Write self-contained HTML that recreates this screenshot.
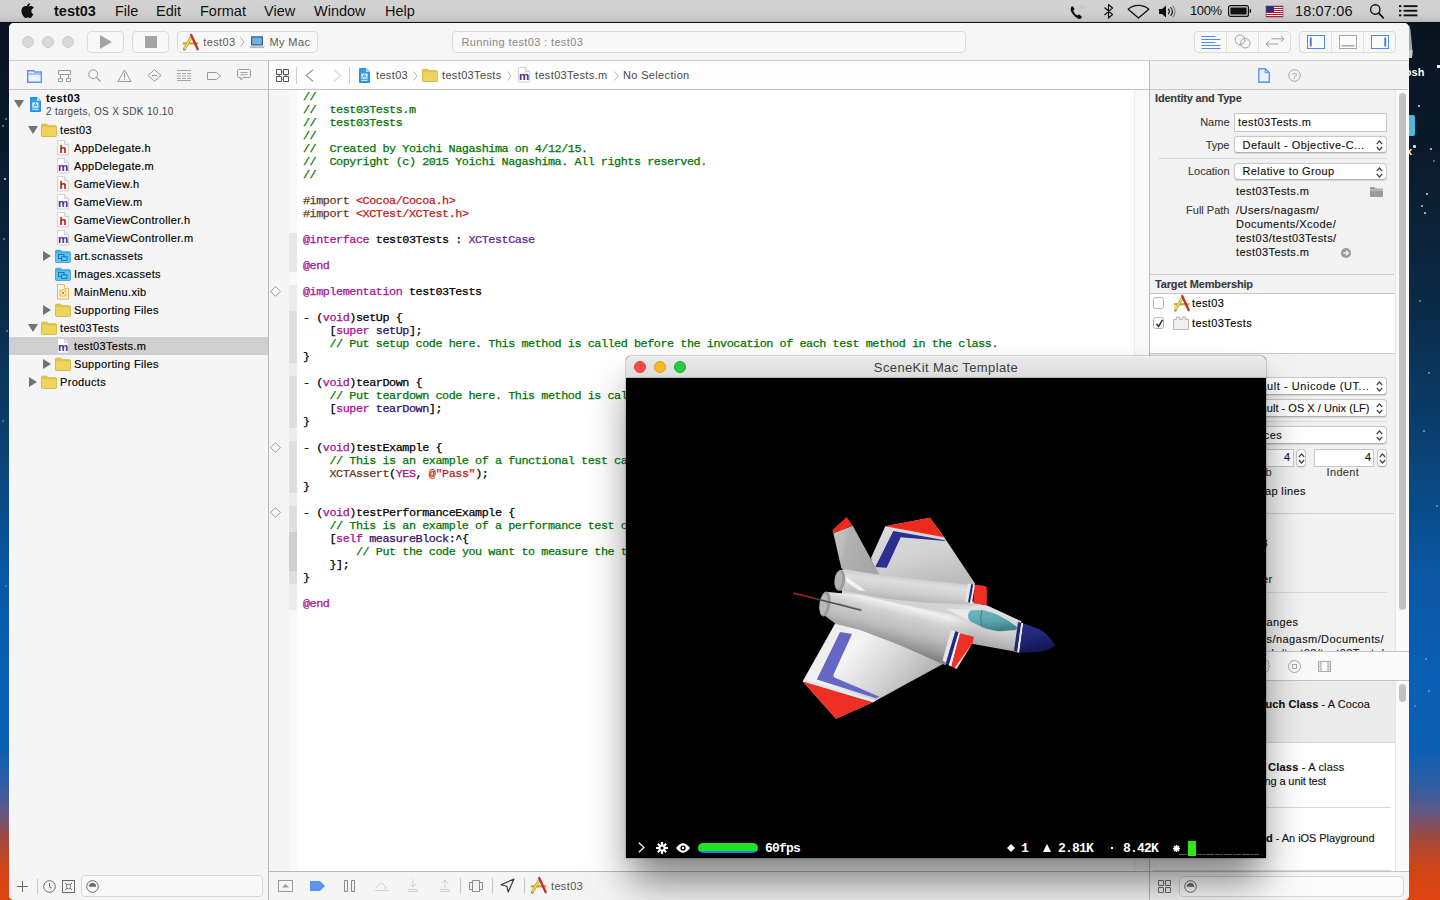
<!DOCTYPE html>
<html>
<head>
<meta charset="utf-8">
<title>Xcode</title>
<style>
*{box-sizing:border-box;margin:0;padding:0}
html,body{width:1440px;height:900px;overflow:hidden}
body{font-family:"Liberation Sans",sans-serif;font-size:11px;color:#222;position:relative;
 background:linear-gradient(180deg,#0a121c 0px,#0b1a2b 150px,#0b2a45 300px,#0a4274 450px,#0a58a6 580px,#0a60b4 680px,#0b5fb2 750px,#2e5ea2 785px,#5e588a 810px,#a04a3c 838px,#d04418 868px,#e04510 900px);}
.abs{position:absolute}
svg{position:absolute;overflow:visible}
/* ---------- menu bar ---------- */
#menubar{position:absolute;left:0;top:0;width:1440px;height:23px;background:linear-gradient(180deg,#d2d2d2 0,#cfcfcf 14px,#c4c4c4 20px,#b4b4b4 22px);border-bottom:1px solid #0c0f14}
#menubar .mi{position:absolute;top:2px;font-size:14.5px;line-height:18px;color:#111;white-space:nowrap}
/* ---------- xcode window ---------- */
#win{position:absolute;left:9px;top:23px;width:1400px;height:877px;background:#f5f5f5;border-radius:5px;overflow:hidden}
#toolbar{position:absolute;left:0;top:0;width:1400px;height:38px;background:#f6f6f6;border-bottom:1px solid #cfcfcf}
.tbtn{position:absolute;border:1px solid #dcdcdc;border-radius:4px;background:#f8f8f8}
/* navigator */
#nav{position:absolute;left:0;top:38px;width:260px;height:842px;background:#f5f5f5;border-right:1px solid #b8b8b8}
#navicons{position:absolute;left:0;top:0;width:259px;height:29px;border-bottom:1px solid #c4c4c4}
.row{position:absolute;left:0;width:259px;height:18px;font-size:11px;line-height:18px;color:#000;white-space:nowrap;-webkit-text-stroke:.15px}
.row.sel{background:#cfcfcf}
/* editor */
#editor{position:absolute;left:260px;top:38px;width:880px;height:842px;background:#fff}
#jump{position:absolute;left:0;top:0;width:880px;height:29px;background:#fdfdfd;border-bottom:1px solid #c4c4c4}
#code{position:absolute;left:34px;top:30px;font-family:"Liberation Mono",monospace;font-size:11.800px;letter-spacing:-.46px;line-height:13px;white-space:pre;color:#000;-webkit-text-stroke:.25px}
.c{color:#007400}.k{color:#aa0d91}.s{color:#c41a16}.p{color:#643820}.t{color:#5c2699}.f{color:#2e0d6e}
.jt{position:absolute;top:7px;font-size:11px;line-height:14px;color:#4a4a4a;letter-spacing:.35px;white-space:nowrap}
#gutter{position:absolute;left:0;top:29px;width:20px;height:781px;background:#f5f5f5}
#ribbon{position:absolute;left:20px;top:29px;width:8px;height:781px;background:#f9f9f9}
#scrollv{position:absolute;left:865px;top:29px;width:15px;height:781px;background:#fafafa;border-left:1px solid #ededed}
#dbg{position:absolute;left:0;top:810px;width:880px;height:32px;background:#f5f5f5;border-top:1px solid #b8b8b8}
/* inspector */
#insp{position:absolute;left:1140px;top:38px;width:260px;height:842px;background:#f2f2f2;overflow:hidden}
#insptab{position:absolute;left:0;top:0;width:259px;height:29px;border-bottom:1px solid #c4c4c4;background:#f3f3f3}
.it{position:absolute;font-size:11px;line-height:14px;color:#111;white-space:nowrap;margin-top:-.7px;-webkit-text-stroke:.12px}
.it.b{font-weight:bold;color:#3a3a3a}
.pop{position:absolute;background:#fff;border:1px solid #c9c9c9;border-bottom-color:#b2b2b2;border-radius:4px;box-shadow:0 .5px 1px rgba(0,0,0,.12)}
#scn{z-index:10;position:absolute;left:626px;top:356px;width:640px;height:502px;background:#000;border-radius:5px 5px 0 0;box-shadow:0 27px 40px -4px rgba(0,0,0,.5),0 0 3px rgba(0,0,0,.15),0 0 0 .5px rgba(0,0,0,.2)}
#scntitle{position:absolute;left:0;top:0;width:640px;height:22px;border-radius:5px 5px 0 0;background:linear-gradient(180deg,#f2f2f2 0,#e9e9e9 8%,#dcdcdc 100%);border-bottom:1px solid #b8b8b8}
.tl{position:absolute;top:4.700px;width:12px;height:12px;border-radius:6px;border:.5px solid #0002}
.st{position:absolute;top:485px;font-family:"Liberation Mono",monospace;font-weight:bold;font-size:13px;letter-spacing:-.8px;line-height:15px;color:#fff;white-space:pre}
.star{position:absolute;width:2px;height:2px;background:#cfd8e4;border-radius:1px}
</style>
</head>
<body>
<svg width="0" height="0" style="position:absolute"><defs>
<g id="xcicon">
 <path d="M.8 9.300H16.300" stroke="#c4aa3c" stroke-width="2.300"/>
 <path d="M2.300 15L8.800 3.800" stroke="#b89e30" stroke-width="2.800" stroke-linecap="round"/>
 <path d="M2.300 15L8.800 3.800" stroke="#eedb52" stroke-width="1.500" stroke-linecap="round"/>
 <path d="M9.200 1L15.600 15" stroke="#c42c2c" stroke-width="2.300" stroke-linecap="round"/>
 <path d="M1.300 15.800h2.200M14.600 15.800h2.200" stroke="#777" stroke-width="1.100"/>
</g>

<g id="folder"><path d="M.5 2.200c0-.6.400-1 1-1h4.300l1.400 1.500h7.300c.6 0 1 .4 1 1v8.800c0 .6-.4 1-1 1h-13c-.6 0-1-.4-1-1z" fill="#e3c646" stroke="#c9aa35" stroke-width=".7"/><path d="M.9 4.200h14.200v8.300c0 .3-.3.600-.6.600H1.500c-.3 0-.6-.3-.6-.6z" fill="#ecd55c"/></g>
<g id="bfolder"><path d="M.5 2.200c0-.6.400-1 1-1h4.300l1.400 1.500h7.300c.6 0 1 .4 1 1v8.800c0 .6-.4 1-1 1h-13c-.6 0-1-.4-1-1z" fill="#3fb0ea" stroke="#2c98d4" stroke-width=".7"/><path d="M.9 4.200h14.200v8.300c0 .3-.3.600-.6.600H1.500c-.3 0-.6-.3-.6-.6z" fill="#5cc3f2"/><rect x="3.500" y="5.500" width="5.500" height="4" fill="none" stroke="#1b6fb5" stroke-width=".9"/><rect x="6.500" y="7.800" width="5.500" height="3.700" fill="#5cc3f2" stroke="#1b6fb5" stroke-width=".9"/></g>
<g id="page"><path d="M.5.500h7l4 4v10.500H.5z" fill="#fff" stroke="#c8c8c8" stroke-width=".8"/><path d="M7.500.500v4h4" fill="#eee" stroke="#c8c8c8" stroke-width=".8"/></g>
<g id="tdown"><path d="M0 0h10l-5 8z" fill="#737373"/></g>
<g id="tright"><path d="M0 0l8 5-8 5z" fill="#737373"/></g>
<g id="projicon"><path d="M.6.600h6.500l3.300 3.300v10.500H.6z" fill="#2f9ff0" stroke="#1a7ad0" stroke-width=".9"/><path d="M7 .6v3.400h3.400z" fill="#bfe2ff"/><rect x="2.300" y="5.500" width="6.200" height="5.200" fill="#e8f5ff"/><path d="M3.500 9.800l1.900-3.500 1.900 3.500M4 8.700h2.800" stroke="#2a8be0" stroke-width=".8" fill="none"/><rect x="2.300" y="11.800" width="6.200" height="1" fill="#e8f5ff"/></g>
</defs></svg>
<div id="desk">
 <svg style="left:1405px;top:24px" width="10" height="36" viewBox="0 0 10 36"><path d="M0 2L4.500 2L5.500 6L7.600 28L7 34L0 34z" fill="#a4a8ad"/><path d="M0 26L7.400 26L7 34L0 34z" fill="#c6c9cc"/></svg>
 <span class="abs" style="left:1404.800px;top:65px;font-size:11px;line-height:14px;font-weight:bold;color:#fff;text-shadow:0 1px 2px rgba(0,0,0,.8)">osh</span>
 <div class="abs" style="left:1437px;top:65px;width:3px;height:3px;background:#e8edf2"></div>
 <div class="abs" style="left:1400px;top:115px;width:15px;height:21px;background:#4fb4e2;border-radius:2px"></div>
 <span class="abs" style="left:1406px;top:144px;font-size:11px;line-height:14px;font-weight:bold;color:#fff">x</span>
 <div class="abs" style="left:1413px;top:145px;width:3px;height:3px;background:#d8dde2;border-radius:1px"></div>
 <i class="star" style="left:1418px;top:105px"></i><i class="star" style="left:1430px;top:148px"></i><i class="star" style="left:1421px;top:205px;opacity:.9"></i><i class="star" style="left:1426px;top:193px"></i><i class="star" style="left:1424px;top:212px"></i><i class="star" style="left:1433px;top:160px;opacity:.5"></i>
 <i class="star" style="left:1419px;top:300px;opacity:.5"></i><i class="star" style="left:1428px;top:372px;opacity:.6"></i><i class="star" style="left:1423px;top:430px;opacity:.6"></i><i class="star" style="left:1436px;top:505px;opacity:.5"></i><i class="star" style="left:1425px;top:658px;opacity:.5"></i><i class="star" style="left:1428px;top:690px;opacity:.5"></i><i class="star" style="left:1414px;top:705px;opacity:.4"></i>
 <i class="star" style="left:4px;top:178px"></i><i class="star" style="left:2px;top:125px;opacity:.6"></i><i class="star" style="left:5px;top:118px;opacity:.5"></i><i class="star" style="left:3px;top:238px;opacity:.5"></i><i class="star" style="left:6px;top:330px;opacity:.5"></i><i class="star" style="left:2px;top:420px;opacity:.4"></i><i class="star" style="left:5px;top:585px;opacity:.4"></i>
</div>
<div id="menubar">
 <svg style="left:20.500px;top:1.500px" width="14" height="17" viewBox="0 0 15 18"><path fill="#111" d="M10.3 0.3c0.1 1-0.3 2-0.9 2.7-0.6 0.7-1.6 1.3-2.5 1.2-0.1-1 0.4-2 0.9-2.6C8.400 0.900 9.500 0.350 10.300 0.300zM13.500 6.100c-0.100 0.100-1.700 1-1.700 3 0 2.300 2 3.100 2.100 3.100 0 0.100-0.300 1.100-1.100 2.200-0.600 0.900-1.300 1.900-2.300 1.900-1 0-1.300-0.600-2.500-0.600-1.100 0-1.500 0.600-2.500 0.600-1 0-1.700-0.900-2.500-2C1.900 12.800 1 10.500 1 8.400c0-3.400 2.200-5.200 4.400-5.200 1.100 0 2.100 0.800 2.800 0.800 0.700 0 1.800-0.800 3.100-0.800 0.500 0 2.300 0.050 3.200 1.900z" transform="translate(-0.5,1) scale(0.98)"/></svg>
 <span class="mi" style="left:54px;font-weight:bold">test03</span>
 <span class="mi" style="left:115px">File</span>
 <span class="mi" style="left:156px">Edit</span>
 <span class="mi" style="left:200px">Format</span>
 <span class="mi" style="left:264px">View</span>
 <span class="mi" style="left:314px">Window</span>
 <span class="mi" style="left:385px">Help</span>
 <!-- phone -->
 <svg style="left:1069px;top:4px" width="18" height="16" viewBox="0 0 18 16"><path fill="#111" d="M1.800 4.300c-.6 1.200.2 4 2.700 6.800 2.500 2.800 5.200 4.300 6.600 3.800l1.500-1.200c.4-.3.400-.8 0-1.200l-2-1.700c-.3-.3-.8-.3-1.100 0l-.8.800c-.8-.3-1.900-1-2.800-2.100-.9-1.100-1.500-2.200-1.600-3.100l.9-.7c.4-.3.400-.7.100-1.100L3.800 2.600c-.3-.4-.8-.4-1.200 0z"/><g fill="#b4b4b4"><circle cx="9.500" cy="4.500" r=".7"/><circle cx="11.500" cy="3" r=".7"/><circle cx="13.500" cy="1.500" r=".7"/><circle cx="11.500" cy="6" r=".6"/><circle cx="13.500" cy="4.200" r=".6"/><circle cx="15.300" cy="2.800" r=".6"/></g></svg>
 <!-- bluetooth -->
 <svg style="left:1103px;top:3px" width="12" height="17" viewBox="0 0 12 17"><path fill="none" stroke="#111" stroke-width="1.200" stroke-linejoin="round" d="M1.500 4.500l8 7-4 3.500V1.500l4 3.500-8 7"/></svg>
 <!-- wifi -->
 <svg style="left:1127px;top:4px" width="23" height="15" viewBox="0 0 23 15"><path fill="none" stroke="#111" stroke-width="1.300" stroke-linejoin="round" d="M1.200 5.200C4 2.600 7.600 1.300 11.500 1.300s7.500 1.300 10.300 3.900L11.500 14z"/></svg>
 <!-- volume -->
 <svg style="left:1158px;top:4px" width="19" height="15" viewBox="0 0 19 15"><path fill="#111" d="M1 5h3l4-3.500v12L4 10H1z"/><path fill="none" stroke="#111" stroke-width="1.100" stroke-linecap="round" d="M10.500 5.200c1 1.300 1 3.300 0 4.600M12.800 3.500c1.900 2.300 1.900 5.700 0 8"/><path fill="none" stroke="#777" stroke-width="1.100" stroke-linecap="round" d="M15 2c2.700 3.200 2.700 7.800 0 11"/></svg>
 <span class="mi" style="left:1190px;font-size:13px;letter-spacing:-.4px">100%</span>
 <!-- battery -->
 <svg style="left:1228px;top:5px" width="24" height="12" viewBox="0 0 24 12"><rect x=".6" y=".6" width="19.800" height="10.800" rx="2" fill="none" stroke="#111" stroke-width="1.200"/><rect x="2.400" y="2.400" width="16.200" height="7.200" rx=".6" fill="#111"/><path fill="#111" d="M21.600 4h.6c.5 0 .9.400.9.900v2.200c0 .5-.4.900-.9.900h-.6z"/></svg>
 <!-- flag -->
 <svg style="left:1266px;top:6px" width="17" height="11" viewBox="0 0 17 11"><rect width="17" height="11" fill="#f4f4f4"/><g fill="#c8102e"><rect y="0" width="17" height="1"/><rect y="2" width="17" height="1"/><rect y="4" width="17" height="1"/><rect y="6" width="17" height="1"/><rect y="8" width="17" height="1"/><rect y="10" width="17" height="1"/></g><rect width="8" height="6" fill="#2a2f7a"/><rect width="17" height="11" fill="none" stroke="#555" stroke-width=".6"/></svg>
 <span class="mi" style="left:1295px;letter-spacing:.15px">18:07:06</span>
 <!-- search -->
 <svg style="left:1369px;top:3px" width="16" height="16" viewBox="0 0 16 16"><circle cx="6.300" cy="6.500" r="4.700" fill="none" stroke="#111" stroke-width="1.400"/><path stroke="#111" stroke-width="1.800" stroke-linecap="round" d="M9.800 10.200l4.500 4.600"/></svg>
 <!-- list -->
 <svg style="left:1399px;top:5px" width="19" height="12" viewBox="0 0 19 12"><g fill="#111"><rect x="0" y=".2" width="2.400" height="1.900"/><rect x="0" y="4.800" width="2.400" height="1.900"/><rect x="0" y="9.400" width="2.400" height="1.900"/><rect x="4.600" y=".2" width="13.800" height="1.900"/><rect x="4.600" y="4.800" width="13.800" height="1.900"/><rect x="4.600" y="9.400" width="13.800" height="1.900"/></g></svg>
</div>
<div id="win">
 <div id="toolbar">
  <div class="abs" style="left:13px;top:13px;width:12px;height:12px;border-radius:6px;background:#d9d9d9;border:1px solid #cdcdcd"></div>
  <div class="abs" style="left:33px;top:13px;width:12px;height:12px;border-radius:6px;background:#d9d9d9;border:1px solid #cdcdcd"></div>
  <div class="abs" style="left:53px;top:13px;width:12px;height:12px;border-radius:6px;background:#d9d9d9;border:1px solid #cdcdcd"></div>
  <div class="tbtn" style="left:78px;top:8px;width:37px;height:22px"></div>
  <svg style="left:91px;top:12px" width="12" height="14" viewBox="0 0 12 14"><path fill="#a4a4a4" d="M0 0l12 7-12 7z"/></svg>
  <div class="tbtn" style="left:123px;top:8px;width:37px;height:22px"></div>
  <div class="abs" style="left:136px;top:13px;width:12px;height:12px;background:#a4a4a4"></div>
  <div class="tbtn" style="left:168px;top:8px;width:141px;height:22px"></div>
  <svg style="left:173px;top:10.500px" width="17" height="17" viewBox="0 0 17 17"><use href="#xcicon"/></svg>
  <span class="abs" style="left:194.300px;top:12px;font-size:11px;line-height:14px;color:#5c5c5c;letter-spacing:.38px">test03</span>
  <svg style="left:231px;top:14px" width="5" height="10" viewBox="0 0 5 10"><path fill="none" stroke="#b0b0b0" stroke-width="1" d="M.5.500l3.500 4.500L.5 9.500"/></svg>
  <svg style="left:240px;top:13px" width="16" height="13" viewBox="0 0 16 13"><rect x="2" y=".3" width="12" height="9.200" rx=".8" fill="#41587f"/><rect x="3.200" y="1.500" width="9.600" height="6.800" fill="#6cb2ec"/><path fill="#c2c5ca" d="M.2 10h15.600l-.8 1.700H1z"/><path d="M1 11.600h14" stroke="#8a9a8a" stroke-width=".5"/></svg>
  <span class="abs" style="left:260.500px;top:12px;font-size:11px;line-height:14px;color:#5c5c5c;letter-spacing:.38px">My Mac</span>
  <div class="tbtn" style="left:443px;top:8px;width:514px;height:22px;background:#f9f9f9"></div>
  <span class="abs" style="left:452.500px;top:12px;font-size:11px;line-height:14px;color:#8a8a8a;letter-spacing:.37px">Running test03 : test03</span>
  <!-- editor mode group -->
  <div class="tbtn" style="left:1185px;top:8px;width:97px;height:22px"></div>
  <div class="abs" style="left:1217px;top:9px;width:1px;height:20px;background:#e2e2e2"></div>
  <div class="abs" style="left:1249px;top:9px;width:1px;height:20px;background:#e2e2e2"></div>
  <svg style="left:1192px;top:12px" width="20" height="14" viewBox="0 0 20 14"><path stroke="#4c8bf5" stroke-width="1" d="M.5 1.500h14M.5 4.500h19M.5 7.500h14M.5 10.500h19M.5 13.500h19"/></svg>
  <svg style="left:1225px;top:11px" width="18" height="16" viewBox="0 0 18 16"><circle cx="6" cy="5.800" r="4.800" fill="none" stroke="#a0a0a0"/><circle cx="11.300" cy="9.200" r="4.800" fill="none" stroke="#a0a0a0"/></svg>
  <svg style="left:1256px;top:12px" width="20" height="13" viewBox="0 0 20 13"><path fill="none" stroke="#a0a0a0" stroke-width="1" d="M6.500 3.800H19M15.800.800l3.200 3-3.200 3M13.500 9H1M4.200 6L1 9l3.200 3"/></svg>
  <!-- panel group -->
  <div class="tbtn" style="left:1290px;top:8px;width:97px;height:22px"></div>
  <div class="abs" style="left:1322px;top:9px;width:1px;height:20px;background:#e2e2e2"></div>
  <div class="abs" style="left:1354px;top:9px;width:1px;height:20px;background:#e2e2e2"></div>
  <svg style="left:1298px;top:12px" width="18" height="14" viewBox="0 0 18 14"><rect x=".5" y=".5" width="17" height="13" fill="#fbfbfb" stroke="#4c8bf5"/><rect x="2.800" y="2.500" width="1.900" height="9" fill="#4c78d8"/></svg>
  <svg style="left:1330px;top:12px" width="18" height="14" viewBox="0 0 18 14"><rect x=".5" y=".5" width="17" height="13" fill="#fbfbfb" stroke="#a8a8a8"/><rect x="2.500" y="10" width="13" height="1.500" fill="#a8a8a8"/></svg>
  <svg style="left:1362px;top:12px" width="18" height="14" viewBox="0 0 18 14"><rect x=".5" y=".5" width="17" height="13" fill="#fbfbfb" stroke="#4c8bf5"/><rect x="13.300" y="2.500" width="1.900" height="9" fill="#4c78d8"/></svg>
 </div>
 <div id="nav"><div id="navicons">
   <svg style="left:18px;top:8.500px" width="15" height="13" viewBox="0 0 15 13"><path d="M.7.700h5.800l1.200 1.300h6.600v10.300H.7z" fill="#eaf1ff" stroke="#5b93f3" stroke-width="1.400" stroke-linejoin="miter"/><path d="M.7 4h13.600" stroke="#5b93f3" stroke-width="1.200"/></svg>
   <svg style="left:49px;top:9px" width="13" height="12" viewBox="0 0 13 12"><path fill="none" stroke="#9a9a9a" d="M.5.500h12v4h-12zM.5 8.500h4v3h-4zM8.500 8.500h4v3h-4zM2.500 4.500v4M10.500 4.500v4"/></svg>
   <svg style="left:79px;top:8px" width="13" height="13" viewBox="0 0 13 13"><circle cx="5.200" cy="5.200" r="4.400" fill="none" stroke="#9a9a9a"/><path d="M8.400 8.400l4 4" stroke="#9a9a9a" stroke-width="1.300"/></svg>
   <svg style="left:108px;top:8px" width="15" height="13" viewBox="0 0 15 13"><path d="M7.500 1l6.500 11.500H1z" fill="none" stroke="#9a9a9a" stroke-linejoin="round"/><path d="M7.500 4.500v4.500M7.500 10v1.200" stroke="#9a9a9a" stroke-width="1.100"/></svg>
   <svg style="left:138px;top:8px" width="15" height="13" viewBox="0 0 15 13"><path d="M7.500.700l6.500 5.800-6.500 5.800L1 6.500z" fill="none" stroke="#9a9a9a" stroke-linejoin="round"/><path d="M4.800 6.500h5.400" stroke="#9a9a9a"/></svg>
   <svg style="left:168px;top:9px" width="14" height="11" viewBox="0 0 14 11"><path stroke="#9a9a9a" d="M0 .5h14M0 3.500h4M5 3.500h4M10 3.500h4M0 6h4M5 6h4M10 6h4M0 8.500h4M5 8.500h4M10 8.500h4M0 10.500h14" stroke-width=".9"/></svg>
   <svg style="left:198px;top:11px" width="14" height="8" viewBox="0 0 14 8"><path d="M.5.500h9l4 3.500-4 3.500h-9z" fill="none" stroke="#9a9a9a" stroke-linejoin="round"/></svg>
   <svg style="left:228px;top:8px" width="14" height="12" viewBox="0 0 14 12"><path d="M1.500.500h11c.6 0 1 .4 1 1v6c0 .6-.4 1-1 1H6l-2 2.500v-2.500H1.500c-.6 0-1-.4-1-1v-6c0-.6.400-1 1-1z" fill="none" stroke="#9a9a9a"/><path d="M3.500 3.500h7M3.500 5.800h7" stroke="#9a9a9a" stroke-width=".9"/></svg>
  </div>
  <svg style="left:5px;top:39px" width="10" height="8" viewBox="0 0 10 8"><use href="#tdown"/></svg>
  <svg style="left:21px;top:36px" width="11" height="15" viewBox="0 0 11 15"><path d="M.6.600h6.500l3.300 3.300v10.500H.6z" fill="#2f9ff0" stroke="#1a7ad0" stroke-width=".9"/><path d="M7 .6v3.400h3.400z" fill="#bfe2ff"/><rect x="2.300" y="5.500" width="6.200" height="5.200" fill="#e8f5ff"/><path d="M3.500 9.800l1.900-3.500 1.900 3.500M4 8.700h2.800" stroke="#2a8be0" stroke-width=".8" fill="none"/><rect x="2.300" y="11.800" width="6.200" height="1" fill="#e8f5ff"/></svg>
  <span class="abs" style="left:37px;top:30px;font-size:11px;line-height:14px;font-weight:bold;color:#000;letter-spacing:.4px">test03</span>
  <span class="abs" style="left:37px;top:44px;font-size:10px;line-height:13px;color:#444;letter-spacing:.32px">2 targets, OS X SDK 10.10</span>
  <div class="row" style="top:60px"><span class="abs" style="left:51px;letter-spacing:.33px">test03</span></div>
  <svg style="left:19px;top:65px" width="10" height="8" viewBox="0 0 10 8"><use href="#tdown"/></svg>
  <svg style="left:32px;top:62px" width="16" height="14" viewBox="0 0 16 14"><use href="#folder"/></svg>
  <div class="row" style="top:78px"><span class="abs" style="left:65px;letter-spacing:.33px">AppDelegate.h</span></div>
  <svg style="left:48px;top:79px" width="12" height="16" viewBox="0 0 12 16"><use href="#page"/><text x="6" y="13.300" text-anchor="middle" font-family="Liberation Sans" font-weight="bold" font-size="11.500" fill="#a01818">h</text></svg>
  <div class="row" style="top:96px"><span class="abs" style="left:65px;letter-spacing:.33px">AppDelegate.m</span></div>
  <svg style="left:48px;top:97px" width="12" height="16" viewBox="0 0 12 16"><use href="#page"/><text x="6" y="13.300" text-anchor="middle" font-family="Liberation Sans" font-weight="bold" font-size="11.500" fill="#4a2a9a">m</text></svg>
  <div class="row" style="top:114px"><span class="abs" style="left:65px;letter-spacing:.33px">GameView.h</span></div>
  <svg style="left:48px;top:115px" width="12" height="16" viewBox="0 0 12 16"><use href="#page"/><text x="6" y="13.300" text-anchor="middle" font-family="Liberation Sans" font-weight="bold" font-size="11.500" fill="#a01818">h</text></svg>
  <div class="row" style="top:132px"><span class="abs" style="left:65px;letter-spacing:.33px">GameView.m</span></div>
  <svg style="left:48px;top:133px" width="12" height="16" viewBox="0 0 12 16"><use href="#page"/><text x="6" y="13.300" text-anchor="middle" font-family="Liberation Sans" font-weight="bold" font-size="11.500" fill="#4a2a9a">m</text></svg>
  <div class="row" style="top:150px"><span class="abs" style="left:65px;letter-spacing:.33px">GameViewController.h</span></div>
  <svg style="left:48px;top:151px" width="12" height="16" viewBox="0 0 12 16"><use href="#page"/><text x="6" y="13.300" text-anchor="middle" font-family="Liberation Sans" font-weight="bold" font-size="11.500" fill="#a01818">h</text></svg>
  <div class="row" style="top:168px"><span class="abs" style="left:65px;letter-spacing:.33px">GameViewController.m</span></div>
  <svg style="left:48px;top:169px" width="12" height="16" viewBox="0 0 12 16"><use href="#page"/><text x="6" y="13.300" text-anchor="middle" font-family="Liberation Sans" font-weight="bold" font-size="11.500" fill="#4a2a9a">m</text></svg>
  <div class="row" style="top:186px"><span class="abs" style="left:65px;letter-spacing:.33px">art.scnassets</span></div>
  <svg style="left:34px;top:190px" width="8" height="10" viewBox="0 0 8 10"><use href="#tright"/></svg>
  <svg style="left:46px;top:188px" width="16" height="14" viewBox="0 0 16 14"><use href="#bfolder"/></svg>
  <div class="row" style="top:204px"><span class="abs" style="left:65px;letter-spacing:.33px">Images.xcassets</span></div>
  <svg style="left:46px;top:206px" width="16" height="14" viewBox="0 0 16 14"><use href="#bfolder"/></svg>
  <div class="row" style="top:222px"><span class="abs" style="left:65px;letter-spacing:.33px">MainMenu.xib</span></div>
  <svg style="left:48px;top:223px" width="12" height="16" viewBox="0 0 12 16"><path d="M.5.500h7l4 4v10.500H.5z" fill="#fff8e0" stroke="#e0b040" stroke-width=".9"/><path d="M7.500.500v4h4" fill="#fff" stroke="#e0b040" stroke-width=".8"/><rect x="3" y="6" width="6" height="6" fill="none" stroke="#e0a020" stroke-width=".8"/><path d="M4.500 7.500l3 3M7.500 7.500l-3 3" stroke="#e07020" stroke-width=".9"/></svg>
  <div class="row" style="top:240px"><span class="abs" style="left:65px;letter-spacing:.33px">Supporting Files</span></div>
  <svg style="left:34px;top:244px" width="8" height="10" viewBox="0 0 8 10"><use href="#tright"/></svg>
  <svg style="left:46px;top:242px" width="16" height="14" viewBox="0 0 16 14"><use href="#folder"/></svg>
  <div class="row" style="top:258px"><span class="abs" style="left:51px;letter-spacing:.33px">test03Tests</span></div>
  <svg style="left:19px;top:263px" width="10" height="8" viewBox="0 0 10 8"><use href="#tdown"/></svg>
  <svg style="left:32px;top:260px" width="16" height="14" viewBox="0 0 16 14"><use href="#folder"/></svg>
  <div class="row sel" style="top:276px"><span class="abs" style="left:65px;letter-spacing:.33px">test03Tests.m</span></div>
  <svg style="left:48px;top:277px" width="12" height="16" viewBox="0 0 12 16"><use href="#page"/><text x="6" y="13.300" text-anchor="middle" font-family="Liberation Sans" font-weight="bold" font-size="11.500" fill="#4a2a9a">m</text></svg>
  <div class="row" style="top:294px"><span class="abs" style="left:65px;letter-spacing:.33px">Supporting Files</span></div>
  <svg style="left:34px;top:298px" width="8" height="10" viewBox="0 0 8 10"><use href="#tright"/></svg>
  <svg style="left:46px;top:296px" width="16" height="14" viewBox="0 0 16 14"><use href="#folder"/></svg>
  <div class="row" style="top:312px"><span class="abs" style="left:51px;letter-spacing:.33px">Products</span></div>
  <svg style="left:20px;top:316px" width="8" height="10" viewBox="0 0 8 10"><use href="#tright"/></svg>
  <svg style="left:32px;top:314px" width="16" height="14" viewBox="0 0 16 14"><use href="#folder"/></svg>
  <svg style="left:8px;top:820px" width="11" height="11" viewBox="0 0 11 11"><path d="M5.500 0v11M0 5.500h11" stroke="#6a6a6a" stroke-width="1"/></svg>
  <div class="abs" style="left:28px;top:818px;width:1px;height:15px;background:#c8c8c8"></div>
  <svg style="left:34px;top:819px" width="13" height="13" viewBox="0 0 13 13"><circle cx="6.500" cy="6.500" r="5.800" fill="none" stroke="#6a6a6a"/><path d="M6.500 3v3.800l2.300 1.300" fill="none" stroke="#6a6a6a"/></svg>
  <svg style="left:53px;top:819px" width="13" height="13" viewBox="0 0 13 13"><rect x=".5" y=".5" width="12" height="12" fill="none" stroke="#6a6a6a"/><path d="M3 3l7 7M10 3l-7 7" stroke="#6a6a6a"/><circle cx="6.500" cy="6.500" r="2.200" fill="#f5f5f5" stroke="#6a6a6a" stroke-width=".8"/></svg>
  <div class="abs" style="left:72px;top:814px;width:182px;height:22px;border:1px solid #d6d6d6;border-radius:4px;background:#f9f9f9"></div>
  <svg style="left:77px;top:819px" width="13" height="13" viewBox="0 0 13 13"><circle cx="6.500" cy="6.500" r="5.800" fill="none" stroke="#6a6a6a"/><path d="M2.800 6.800a3.700 3.700 0 0 1 7.400 0z" fill="#6a6a6a"/></svg>
 </div>
 <div id="editor"><div id="jump">
   <svg style="left:6.500px;top:8px" width="13" height="13" viewBox="0 0 13 13"><path fill="none" stroke="#555" stroke-width="1" d="M.5.500h5v5h-5zM7.500.500h5v5h-5zM.5 7.500h5v5h-5zM7.500 7.500h5v5h-5zM5.500 3h2M3 5.500v2M5.500 10h2M10 5.500v2"/></svg>
   <div class="abs" style="left:27px;top:6px;width:1px;height:17px;background:#cfcfcf"></div>
   <svg style="left:36px;top:8px" width="9" height="13" viewBox="0 0 9 13"><path fill="none" stroke="#9a9a9a" stroke-width="1.200" d="M8 .7L1.300 6.500 8 12.300"/></svg>
   <svg style="left:64px;top:8px" width="9" height="13" viewBox="0 0 9 13"><path fill="none" stroke="#d6d6d6" stroke-width="1.200" d="M1 .7l6.700 5.800L1 12.300"/></svg>
   <div class="abs" style="left:80px;top:6px;width:1px;height:17px;background:#cfcfcf"></div>
   <svg style="left:90px;top:7px" width="11" height="15" viewBox="0 0 11 15"><use href="#projicon"/></svg>
   <span class="jt" style="left:107px">test03</span>
   <svg class="chev" style="left:144px;top:10px" width="5" height="10" viewBox="0 0 5 10"><path fill="none" stroke="#b8b8b8" d="M.5.500l3.500 4.500L.5 9.500"/></svg>
   <svg style="left:153px;top:7px" width="16" height="14" viewBox="0 0 16 14"><use href="#folder"/></svg>
   <span class="jt" style="left:173px">test03Tests</span>
   <svg class="chev" style="left:238px;top:10px" width="5" height="10" viewBox="0 0 5 10"><path fill="none" stroke="#b8b8b8" d="M.5.500l3.500 4.500L.5 9.500"/></svg>
   <svg style="left:249px;top:6px" width="12" height="16" viewBox="0 0 12 16"><use href="#page"/><text x="6" y="13.300" text-anchor="middle" font-family="Liberation Sans" font-weight="bold" font-size="11.500" fill="#4a2a9a">m</text></svg>
   <span class="jt" style="left:266px">test03Tests.m</span>
   <svg class="chev" style="left:345px;top:10px" width="5" height="10" viewBox="0 0 5 10"><path fill="none" stroke="#b8b8b8" d="M.5.500l3.500 4.500L.5 9.500"/></svg>
   <span class="jt" style="left:354px">No Selection</span>
  </div>
  <div id="gutter"></div><div id="ribbon"></div><div id="scrollv"></div>
  <div class="abs" style="left:20px;top:172px;width:8px;height:39px;background:#e8e8e8"></div>
  <div class="abs" style="left:20px;top:224px;width:8px;height:325px;background:#ececec"></div>
  <div class="abs" style="left:20px;top:250px;width:8px;height:52px;background:#dedede"></div>
  <div class="abs" style="left:20px;top:315px;width:8px;height:52px;background:#dedede"></div>
  <div class="abs" style="left:20px;top:380px;width:8px;height:52px;background:#dedede"></div>
  <div class="abs" style="left:20px;top:445px;width:8px;height:78px;background:#dedede"></div>
  <div class="abs" style="left:20px;top:471px;width:8px;height:39px;background:#cfcfcf"></div>
  <svg style="left:1px;top:225.0px" width="11" height="11" viewBox="0 0 11 11"><path d="M5.500.700l4.800 4.800-4.800 4.800L.7 5.500z" fill="#fff" stroke="#8a8a8a" stroke-width=".9"/></svg>
  <svg style="left:1px;top:381.0px" width="11" height="11" viewBox="0 0 11 11"><path d="M5.500.700l4.800 4.800-4.800 4.800L.7 5.500z" fill="#fff" stroke="#8a8a8a" stroke-width=".9"/></svg>
  <svg style="left:1px;top:446.0px" width="11" height="11" viewBox="0 0 11 11"><path d="M5.500.700l4.800 4.800-4.800 4.800L.7 5.500z" fill="#fff" stroke="#8a8a8a" stroke-width=".9"/></svg>
  <div id="code"><span class="c">//</span>
<span class="c">//  test03Tests.m</span>
<span class="c">//  test03Tests</span>
<span class="c">//</span>
<span class="c">//  Created by Yoichi Nagashima on 4/12/15.</span>
<span class="c">//  Copyright (c) 2015 Yoichi Nagashima. All rights reserved.</span>
<span class="c">//</span>

<span class="p">#import </span><span class="s">&lt;Cocoa/Cocoa.h&gt;</span>
<span class="p">#import </span><span class="s">&lt;XCTest/XCTest.h&gt;</span>

<span class="k">@interface</span> test03Tests : <span class="t">XCTestCase</span>

<span class="k">@end</span>

<span class="k">@implementation</span> test03Tests

- (<span class="k">void</span>)setUp {
    [<span class="k">super</span> <span class="f">setUp</span>];
    <span class="c">// Put setup code here. This method is called before the invocation of each test method in the class.</span>
}

- (<span class="k">void</span>)tearDown {
    <span class="c">// Put teardown code here. This method is called after the invocation of each test method in the class.</span>
    [<span class="k">super</span> <span class="f">tearDown</span>];
}

- (<span class="k">void</span>)testExample {
    <span class="c">// This is an example of a functional test case.</span>
    <span class="p">XCTAssert</span>(<span class="k">YES</span>, <span class="s">@"Pass"</span>);
}

- (<span class="k">void</span>)testPerformanceExample {
    <span class="c">// This is an example of a performance test case.</span>
    [<span class="k">self</span> <span class="f">measureBlock</span>:^{
        <span class="c">// Put the code you want to measure the time of here.</span>
    }];
}

<span class="k">@end</span></div>
  <div id="dbg">
   <svg style="left:9px;top:8px" width="15" height="12" viewBox="0 0 15 12"><rect x=".5" y=".5" width="14" height="11" fill="none" stroke="#9a9a9a"/><path d="M4 7.500L7.500 4 11 7.500z" fill="#9a9a9a"/></svg>
   <svg style="left:41px;top:9px" width="15" height="10" viewBox="0 0 15 10"><path d="M1 0h9l5 5-5 5H1c-.6 0-1-.4-1-1V1c0-.6.400-1 1-1z" fill="#5b93f3"/></svg>
   <svg style="left:75px;top:8px" width="11" height="12" viewBox="0 0 11 12"><path fill="none" stroke="#8a8a8a" d="M.5.500h3v11h-3zM7.500.500h3v11h-3z"/></svg>
   <svg style="left:106px;top:8px" width="14" height="12" viewBox="0 0 14 12"><path fill="none" stroke="#d0d0d0" d="M1 8l5.500-5.500L12 8H9M0 10.500h14"/></svg>
   <svg style="left:139px;top:7px" width="10" height="13" viewBox="0 0 10 13"><path fill="none" stroke="#d0d0d0" d="M5 0v8M2 5l3 3 3-3M0 10.500h10M0 12.500h10"/></svg>
   <svg style="left:171px;top:7px" width="10" height="13" viewBox="0 0 10 13"><path fill="none" stroke="#d0d0d0" d="M5 9V1M2 4l3-3 3 3M0 10.500h10M0 12.500h10"/></svg>
   <div class="abs" style="left:191px;top:6px;width:1px;height:16px;background:#c4c4c4"></div>
   <svg style="left:200px;top:8px" width="14" height="12" viewBox="0 0 14 12"><path fill="none" stroke="#8a8a8a" d="M3.500.500h7v11h-7zM.5 2.500h3v7h-3zM10.500 2.500h3v7h-3z"/></svg>
   <div class="abs" style="left:223px;top:6px;width:1px;height:16px;background:#c4c4c4"></div>
   <svg style="left:231px;top:6px" width="15" height="15" viewBox="0 0 15 15"><path fill="none" stroke="#333" stroke-width="1.100" stroke-linejoin="round" d="M14 1L1 6.800l5.800 1.400L8.200 14z"/></svg>
   <div class="abs" style="left:255px;top:6px;width:1px;height:16px;background:#c4c4c4"></div>
   <svg style="left:261px;top:5px" width="17" height="17" viewBox="0 0 17 17"><use href="#xcicon"/></svg>
   <span class="abs" style="left:282px;top:7px;font-size:11px;line-height:14px;color:#555;letter-spacing:.35px">test03</span>
  </div>
 </div>
 <div id="insp">
  <div id="insptab"></div>
  <svg style="left:109px;top:7px" width="12" height="15" viewBox="0 0 12 15"><path d="M.8.800h6.500l4 4v9.400H.8z" fill="#e9f1ff" stroke="#5b93f3" stroke-width="1.400" stroke-linejoin="round"/><path d="M7.300.800v4h4" fill="none" stroke="#5b93f3" stroke-width="1.100"/></svg>
  <svg style="left:139px;top:8px" width="13" height="13" viewBox="0 0 13 13"><circle cx="6.500" cy="6.500" r="5.800" fill="none" stroke="#a8a8a8"/><text x="6.500" y="9.800" text-anchor="middle" font-family="Liberation Sans" font-size="9" fill="#a0a0a0">?</text></svg>
  <span class="it b" style="left:6px;top:31px;letter-spacing:-.18px">Identity and Type</span>
  <span class="it" style="right:179.5px;top:55px;color:#3a3a3a;">Name</span>
  <div class="abs" style="left:85px;top:52px;width:153px;height:19px;background:#fff;border:1px solid #c6c6c6"></div>
  <span class="it" style="left:89px;top:55px;letter-spacing:0.42px;">test03Tests.m</span>
  <span class="it" style="right:179.5px;top:77.5px;color:#3a3a3a;">Type</span>
  <div class="pop" style="left:85px;top:74.7px;width:153px;height:17.8px"></div><svg style="left:227px;top:78.5px" width="7" height="11" viewBox="0 0 7 11"><path fill="none" stroke="#444" stroke-width="1.200" d="M.8 4L3.500 1l2.700 3M.8 7l2.700 3 2.700-3"/></svg>
  <span class="it" style="left:93.5px;top:77.5px;letter-spacing:0.45px;">Default - Objective-C...</span>
  <div class="abs" style="left:9px;top:97px;width:229px;height:1px;background:#d9d9d9"></div>
  <span class="it" style="right:179.5px;top:104px;color:#3a3a3a;">Location</span>
  <div class="pop" style="left:85px;top:101.7px;width:153px;height:17.8px"></div><svg style="left:227px;top:105.5px" width="7" height="11" viewBox="0 0 7 11"><path fill="none" stroke="#444" stroke-width="1.200" d="M.8 4L3.500 1l2.700 3M.8 7l2.700 3 2.700-3"/></svg>
  <span class="it" style="left:93.5px;top:104px;letter-spacing:0.38px;">Relative to Group</span>
  <span class="it" style="left:87px;top:124px;letter-spacing:0.42px;">test03Tests.m</span>
  <svg style="left:220.5px;top:126px" width="13" height="10" viewBox="0 0 13 10"><path d="M0 1c0-.5.400-1 1-1h3.500l1 1.500H12c.6 0 1 .4 1 1V9c0 .6-.4 1-1 1H1c-.6 0-1-.4-1-1z" fill="#9c9c9c"/><path d="M0 3h13" stroke="#f2f2f2" stroke-width=".6"/></svg>
  <span class="it" style="right:179.5px;top:142.5px;color:#3a3a3a;">Full Path</span>
  <span class="it" style="left:87px;top:142.5px;letter-spacing:0.45px;">/Users/nagasm/</span>
  <span class="it" style="left:87px;top:156.5px;letter-spacing:0.45px;">Documents/Xcode/</span>
  <span class="it" style="left:87px;top:170.5px;letter-spacing:0.47px;">test03/test03Tests/</span>
  <span class="it" style="left:87px;top:184.5px;letter-spacing:0.42px;">test03Tests.m</span>
  <svg style="left:192px;top:186.5px" width="10" height="10" viewBox="0 0 10 10"><circle cx="5" cy="5" r="5" fill="#9a9a9a"/><path d="M2.200 5h5M5 2.600L7.400 5 5 7.400" fill="none" stroke="#f2f2f2" stroke-width="1.300"/></svg>
  <div class="abs" style="left:0;top:213px;width:245px;height:1px;background:#d0d0d0"></div>
  <span class="it b" style="left:6px;top:216.5px;letter-spacing:-.16px">Target Membership</span>
  <div class="abs" style="left:0;top:232px;width:246px;height:61px;background:#fff;border-top:1px solid #c8c8c8;border-bottom:1px solid #c8c8c8"></div>
  <div class="abs" style="left:4px;top:236px;width:11px;height:11.500px;border:1px solid #b4b4b4;border-radius:2.500px;background:#fff"></div>
  <svg style="left:23.5px;top:234px" width="17" height="17" viewBox="0 0 17 17"><use href="#xcicon"/></svg>
  <span class="it" style="left:43px;top:235.5px;letter-spacing:0.4px;color:#000">test03</span>
  <div class="abs" style="left:4px;top:256px;width:11px;height:11.500px;border:1px solid #b4b4b4;border-radius:2.500px;background:#fff"></div>
  <svg style="left:5.5px;top:257.5px" width="9" height="9" viewBox="0 0 9 9"><path d="M1.500 4.800l2 2.700L7.500.800" fill="none" stroke="#222" stroke-width="1.400"/></svg>
  <svg style="left:24px;top:255px" width="16" height="14" viewBox="0 0 16 14"><path d="M.5 3.500h2.800v-2.500h3.400v2.500h2.600v-2.500h3.400v2.500h2.800v9.500c0 .3-.2.500-.5.500H1c-.3 0-.5-.2-.5-.5z" fill="#f0f0f0" stroke="#b0b0b0" stroke-width=".9"/></svg>
  <span class="it" style="left:43px;top:255.5px;letter-spacing:0.4px;color:#000">test03Tests</span>
  <div class="pop" style="left:85px;top:316.2px;width:153px;height:17.8px"></div><svg style="left:227px;top:320px" width="7" height="11" viewBox="0 0 7 11"><path fill="none" stroke="#444" stroke-width="1.200" d="M.8 4L3.500 1l2.700 3M.8 7l2.700 3 2.700-3"/></svg>
  <span class="it" style="right:39.5px;top:318.5px;letter-spacing:0.57px;">Default - Unicode (UT...</span>
  <div class="pop" style="left:85px;top:338.2px;width:153px;height:17.8px"></div><svg style="left:227px;top:342px" width="7" height="11" viewBox="0 0 7 11"><path fill="none" stroke="#444" stroke-width="1.200" d="M.8 4L3.500 1l2.700 3M.8 7l2.700 3 2.700-3"/></svg>
  <span class="it" style="right:39.5px;top:340.5px;letter-spacing:0.03px;">Default - OS X / Unix (LF)</span>
  <div class="abs" style="left:9px;top:360px;width:229px;height:1px;background:#d9d9d9"></div>
  <div class="pop" style="left:85px;top:365.2px;width:153px;height:17.8px"></div><svg style="left:227px;top:369px" width="7" height="11" viewBox="0 0 7 11"><path fill="none" stroke="#444" stroke-width="1.200" d="M.8 4L3.500 1l2.700 3M.8 7l2.700 3 2.700-3"/></svg>
  <span class="it" style="left:93.5px;top:367.5px;letter-spacing:0.53px;">Spaces</span>
  <div class="abs" style="left:85px;top:388px;width:60px;height:18px;background:#fff;border:1px solid #c6c6c6"></div>
  <div class="abs" style="left:165px;top:388px;width:60px;height:18px;background:#fff;border:1px solid #c6c6c6"></div>
  <span class="it" style="right:119px;top:390px;letter-spacing:0px;">4</span>
  <span class="it" style="right:38px;top:390px;letter-spacing:0px;">4</span>
  <div class="pop" style="left:147px;top:388px;width:10px;height:18px;border-radius:4px"></div><svg style="left:148.5px;top:391.5px" width="7" height="11" viewBox="0 0 7 11"><path fill="none" stroke="#444" stroke-width="1.200" d="M.8 4L3.500 1l2.700 3M.8 7l2.700 3 2.700-3"/></svg>
  <div class="pop" style="left:228px;top:388px;width:10px;height:18px;border-radius:4px"></div><svg style="left:229.5px;top:391.5px" width="7" height="11" viewBox="0 0 7 11"><path fill="none" stroke="#444" stroke-width="1.200" d="M.8 4L3.500 1l2.700 3M.8 7l2.700 3 2.700-3"/></svg>
  <span class="it" style="right:137px;top:404.5px;letter-spacing:0.4px;color:#3a3a3a">Tab</span>
  <span class="it" style="right:50px;top:404.5px;letter-spacing:0.3px;color:#3a3a3a">Indent</span>
  <span class="it" style="right:103px;top:424px;letter-spacing:0.4px;">Wrap lines</span>
  <div class="abs" style="left:0;top:452px;width:245px;height:1px;background:#d0d0d0"></div>
  <span class="it" style="right:141px;top:476px;letter-spacing:0.3px;">ABC123</span>
  <span class="it" style="right:136.5px;top:512px;letter-spacing:0.3px;">master</span>
  <div class="abs" style="left:9px;top:530.5px;width:229px;height:1px;background:#d9d9d9"></div>
  <span class="it" style="right:110.5px;top:554.5px;letter-spacing:0.4px;">No changes</span>
  <span class="it" style="right:25px;top:572px;letter-spacing:0.42px;">/Users/nagasm/Documents/</span>
  <span class="it" style="right:25px;top:586px;letter-spacing:0.42px;">Xcode/test03/test03Tests/</span>
  <div class="abs" style="left:246px;top:29px;width:14px;height:561px;background:#fafafa;border-left:1px solid #e6e6e6"></div>
  <div class="abs" style="left:249.5px;top:32px;width:7px;height:517px;background:#c2c2c2;border-radius:3.500px"></div>
  <div class="abs" style="left:0;top:0;width:1px;height:842px;background:#b8b8b8;z-index:5"></div>
  <div class="abs" style="left:1px;top:590px;width:259px;height:30px;background:#fafafa;border-top:1px solid #c4c4c4;border-bottom:1px solid #c4c4c4"></div>
  <svg style="left:79px;top:598px" width="12" height="15" viewBox="0 0 12 15"><path d="M.8.800h6.500l4 4v9.400H.8z" fill="none" stroke="#a8a8a8" stroke-linejoin="round"/></svg>
  <svg style="left:108px;top:599px" width="14" height="13" viewBox="0 0 14 13"><path d="M4.500.500C3 .5 2.500 1.200 2.500 2.500v2c0 1-.5 1.500-1.500 1.500 1 0 1.500.5 1.500 1.500v2c0 1.300.5 2 2 2M9.500.500c1.500 0 2 .7 2 2v2c0 1 .5 1.500 1.500 1.500-1 0-1.500.5-1.500 1.500v2c0 1.300-.5 2-2 2" fill="none" stroke="#a8a8a8"/></svg>
  <svg style="left:139px;top:599px" width="13" height="13" viewBox="0 0 13 13"><circle cx="6.500" cy="6.500" r="6" fill="none" stroke="#a8a8a8"/><rect x="4.500" y="4.500" width="4" height="4" fill="none" stroke="#a8a8a8"/></svg>
  <svg style="left:169px;top:600px" width="13" height="11" viewBox="0 0 13 11"><path d="M.5.500h12v10h-12zM3 .5v10M10 .5v10" fill="none" stroke="#a8a8a8"/><path d="M.5 3h2.500M.5 5.500h2.500M.5 8h2.500M10 3h2.500M10 5.500h2.500M10 8h2.500" stroke="#a8a8a8" stroke-width=".8"/></svg>
  <div class="abs" style="left:1px;top:620px;width:245px;height:190px;background:#fff"></div>
  <div class="abs" style="left:1px;top:620px;width:245px;height:62px;background:#ebebeb;border-bottom:1px solid #d4d4d4"></div>
  <span class="it" style="right:39px;top:637px;letter-spacing:.09px"><b>Cocoa Touch Class</b> - A Cocoa</span>
  <span class="it" style="right:64.5px;top:700px;letter-spacing:.2px"><b>Test Case Class</b> - A class</span>
  <span class="it" style="right:83px;top:713.5px;letter-spacing:-.1px">implementing a unit test</span>
  <div class="abs" style="left:4px;top:745.5px;width:238px;height:1px;background:#d9d9d9"></div>
  <span class="it" style="right:34.5px;top:770.5px;letter-spacing:-.05px"><b>Playground</b> - An iOS Playground</span>
  <div class="abs" style="left:4px;top:808.5px;width:238px;height:1px;background:#d9d9d9"></div>
  <div class="abs" style="left:246px;top:620px;width:14px;height:190px;background:#fafafa;border-left:1px solid #e6e6e6"></div>
  <div class="abs" style="left:249.5px;top:622.5px;width:7px;height:18px;background:#c2c2c2;border-radius:3.500px"></div>
  <div class="abs" style="left:1px;top:810px;width:259px;height:29px;background:#f5f5f5;border-top:1px solid #c4c4c4"></div>
  <svg style="left:9px;top:819px" width="13" height="13" viewBox="0 0 13 13"><path fill="none" stroke="#6e6e6e" d="M.5.500h5v5h-5zM7.500.500h5v5h-5zM.5 7.500h5v5h-5zM7.500 7.500h5v5h-5z"/></svg>
  <div class="abs" style="left:30px;top:815px;width:225px;height:21px;border:1px solid #d6d6d6;border-radius:4px;background:#fbfbfb"></div>
  <svg style="left:34.5px;top:819px" width="13" height="13" viewBox="0 0 13 13"><circle cx="6.500" cy="6.500" r="5.800" fill="none" stroke="#6a6a6a"/><path d="M2.800 6.800a3.700 3.700 0 0 1 7.400 0z" fill="#6a6a6a"/></svg>
 </div>
</div>
<div id="scn">
 <div id="scntitle">
  <div class="tl" style="left:8px;background:#fc4a49;border-color:#df3a38"></div>
  <div class="tl" style="left:28px;background:#fdb825;border-color:#de9c1a"></div>
  <div class="tl" style="left:48px;background:#28c93f;border-color:#1cab2c"></div>
  <span class="abs" style="left:0;width:640px;top:4px;text-align:center;font-size:13px;line-height:16px;color:#404040;letter-spacing:.38px">SceneKit Mac Template</span>
 </div>
 <svg style="left:0;top:22px" width="640" height="480" viewBox="626 378 640 480">
  <defs>
   <linearGradient id="gw1" x1="0" y1="0" x2="0.300" y2="1"><stop offset="0" stop-color="#dedede"/><stop offset=".6" stop-color="#d2d2d2"/><stop offset="1" stop-color="#bcbcbc"/></linearGradient>
   <linearGradient id="gw2" x1="0.100" y1="0" x2="1" y2=".5"><stop offset="0" stop-color="#e6e6e6"/><stop offset=".35" stop-color="#f4f4f4"/><stop offset=".7" stop-color="#cfcfcf"/><stop offset="1" stop-color="#a8a8a8"/></linearGradient>
   <linearGradient id="gfin" x1="0" y1="0" x2="1" y2=".3"><stop offset="0" stop-color="#c4c4c4"/><stop offset=".3" stop-color="#bcbcbc"/><stop offset=".36" stop-color="#b2b2b2"/><stop offset="1" stop-color="#a6a6a6"/></linearGradient>
   <linearGradient id="gb1" gradientUnits="userSpaceOnUse" x1="907" y1="576" x2="904" y2="602"><stop offset="0" stop-color="#c9c9c9"/><stop offset=".25" stop-color="#dddddd"/><stop offset=".6" stop-color="#cfcfcf"/><stop offset="1" stop-color="#b2b2b2"/></linearGradient>
   <linearGradient id="gb2" gradientUnits="userSpaceOnUse" x1="896" y1="598" x2="884" y2="646"><stop offset="0" stop-color="#d2d2d2"/><stop offset=".13" stop-color="#f0f0f0"/><stop offset=".3" stop-color="#d2d2d2"/><stop offset=".6" stop-color="#bdbdbd"/><stop offset=".85" stop-color="#9c9c9c"/><stop offset="1" stop-color="#838383"/></linearGradient>
   <linearGradient id="gb3" x1=".3" y1="0" x2="0" y2="1"><stop offset="0" stop-color="#e0e0e0"/><stop offset=".4" stop-color="#d0d0d0"/><stop offset="1" stop-color="#8e8e8e"/></linearGradient>
   <linearGradient id="gcone" x1="0" y1="0" x2="0.300" y2="1"><stop offset="0" stop-color="#2b2f8c"/><stop offset=".5" stop-color="#23267a"/><stop offset="1" stop-color="#141650"/></linearGradient>
   <linearGradient id="gcan" x1="0" y1="0" x2="0.200" y2="1"><stop offset="0" stop-color="#6fb7bf"/><stop offset=".6" stop-color="#5aa5ad"/><stop offset="1" stop-color="#3f8088"/></linearGradient>
  <linearGradient id="gfade" gradientUnits="userSpaceOnUse" x1="948" y1="0" x2="972" y2="0"><stop offset="0" stop-color="#000"/><stop offset="1" stop-color="#fff"/></linearGradient><mask id="mfade" maskUnits="userSpaceOnUse" x="940" y="590" width="100" height="80"><rect x="940" y="590" width="100" height="80" fill="url(#gfade)"/></mask>
  </defs>
  <!-- upper wing -->
  <path d="M885.300 526.300L930 517.700L944 537L975 583.500L975 590L877 580L871 558z" fill="url(#gw1)"/>
  <path d="M885.300 526.300L930 517.700L944.200 537.300z" fill="#ee2a20"/>
  <path d="M893.300 531L945 540.200L945 540.900L900.700 537.300L886.700 567.800L875.300 567z" fill="#2c2f92"/>
  <!-- lower wing -->
  <path d="M835.300 623.300L802.700 681.300L836 718.700L873.300 702L948.900 660.800L946 652L915.600 638L840 618z" fill="url(#gw2)"/>
  <path d="M802.700 681.300L836 718.700L873.300 702.200z" fill="#ee2f26"/>
  <path d="M802.700 681.300L873.300 702.200L876 700.600L805 679z" fill="#e9e9ee"/>
  <path d="M840 632L852 634L833.500 674.500q-.8 2.200 1.500 3.200L879.500 696.800L876 698.200L816.800 679.500z" fill="#6468c4"/>
  <!-- tail fin -->
  <path d="M833.300 533L852.700 525.700L879.300 574.300L877.300 576L842.700 569.500L841.300 567.700z" fill="url(#gfin)"/>
  <path d="M832.700 529.700L846.700 517L852.700 525.700L833.300 533.200z" fill="#ee2a20"/>
  <!-- upper nacelle -->
  <path d="M842 589.500L968 600L986 605.500L975 640L940 640L900 608L860 598L842 594z" fill="#d3d3d3"/>
  <path d="M839 570.500L845.300 569.300L878.700 574.700L968 584.700L972 584.900L970 604.500L926.700 602.700L886.700 598.700L845.300 591L839 590.200z" fill="url(#gb1)"/>
  <ellipse cx="839.800" cy="580.300" rx="5.400" ry="10.400" transform="rotate(6 839.800 580.300)" fill="#9a9a9a"/>
  <ellipse cx="838.600" cy="580.300" rx="3.600" ry="8.800" transform="rotate(6 838.600 580.300)" fill="#b4b4b4"/>
  <path d="M846 576.500L866 591L859 590.500L846 581.500z" fill="#f8f8f8" opacity=".85"/>
  <!-- main fuselage / lower engine -->
  <path d="M826 592.200L828 592L860 595L900 604L946.700 613.300L975 620L974 644L960 634L948.900 660.800L945.300 665.300L900 645.300L860 630L836 624L825.300 616z" fill="url(#gb2)"/>
  <ellipse cx="825" cy="604" rx="5.600" ry="12.600" transform="rotate(8 825 604)" fill="#9d9d9d"/>
  <ellipse cx="823.600" cy="604" rx="3.600" ry="10.600" transform="rotate(8 823.600 604)" fill="#b8b8b8"/>
  <!-- front fuselage -->
  <path d="M950 607L986.700 605.300L1021.300 621.300L1018.700 652.700L1013.300 651.300L973.300 644L950 640z" fill="url(#gb3)" mask="url(#mfade)"/>
  <!-- highlights on bodies -->
  <!-- upper intake -->
  <path d="M968 584L971.300 584L968 602L965 601.500z" fill="#e6e6ea"/>
  <path d="M971.300 584L973.300 584.700L970 602.700L968 602z" fill="#24277f"/>
  <path d="M973.300 584.700L975 584.900L972 603L970 602.700z" fill="#f0f0f0"/>
  <path d="M974.700 584.700L984 585.800q3 .6 3 3.500L986.700 605.300L973.300 603.300z" fill="#ee2f26"/>
  <!-- lower intake -->
  <path d="M951 630.500L955.300 631.300L946 662.700L942.500 660.500z" fill="#e6e6ea"/>
  <path d="M955.300 631.300L958.700 632.300L948.700 665.300L946 662.700z" fill="#24277f"/>
  <path d="M958.700 632.300L960.300 633.200L951.500 666.800L948.700 665.300z" fill="#f2f2f2"/>
  <path d="M960 633.300L974 636.700L972.700 642.700L956.700 668.700L951.300 666.700z" fill="#ee2f26"/>
  <path d="M972.700 642.700L956.700 668.700L954.500 668z" fill="#f0d8d4"/>
  <!-- canopy spine -->
  <path d="M946 608.700L969.300 609.500L985 611L972 622L960 616z" fill="#e9e9e9"/>
  <!-- canopy -->
  <path d="M968 616Q968.500 611 971.500 610.300L982.700 610Q992 612 1000 616Q1010 621 1016.700 626.700Q1017.500 629 1015.300 630L1000 631.300Q990 630.500 982.700 627.300L970.500 621.500Q968 619.500 968 616z" fill="url(#gcan)"/>
  <path d="M982 610.500Q979.500 618 981.800 626.500" stroke="#3d7780" stroke-width="1" fill="none"/>
  <!-- nose stripes and cone -->
  <path d="M1018 622L1021.300 622.700L1017.300 652L1014 650.700z" fill="#23267a"/>
  <path d="M1021.300 622.700L1023.300 623.300L1019.300 652.700L1017.300 652z" fill="#eeeeee"/>
  <path d="M1023.300 623.300L1040 629.500Q1049 635 1055.300 645.300Q1050 650 1040 652L1019.300 652.700z" fill="url(#gcone)"/>
  <!-- antenna -->
  <path d="M793.300 593L813 598" stroke="#b0202a" stroke-width="1.300"/>
  <path d="M813 598L861.300 610.300" stroke="#4a4a4a" stroke-width="1.500"/>
  <path d="M838 603.200L861.300 609.500" stroke="#8a8a8a" stroke-width=".7"/>
 </svg>
 <!-- stats bar -->
 <svg style="left:12px;top:486px" width="7" height="11" viewBox="0 0 7 11"><path d="M.8.800L6 5.500.8 10.200" fill="none" stroke="#fff" stroke-width="1.200"/></svg>
 <svg style="left:30px;top:486px" width="12" height="12" viewBox="0 0 12 12"><g stroke="#fff" stroke-width="2.200"><path d="M6 0v12M0 6h12M1.800 1.800l8.400 8.400M10.200 1.800l-8.400 8.400"/></g><circle cx="6" cy="6" r="3.600" fill="#fff"/><circle cx="6" cy="6" r="1.500" fill="#000"/></svg>
 <svg style="left:50px;top:487px" width="14" height="10" viewBox="0 0 14 10"><path d="M0 5Q7-4.500 14 5Q7 14.500 0 5z" fill="#fff"/><circle cx="7" cy="5" r="2.600" fill="#000"/><circle cx="7" cy="5" r="1.200" fill="#fff"/></svg>
 <div class="abs" style="left:72px;top:487px;width:60px;height:10px;border-radius:5px;background:linear-gradient(180deg,#1fe41f 0,#1fe41f 76%,#1e7bff 76%,#1e7bff 100%)"></div>
 <span class="st" style="left:139px">60fps</span>
 <svg style="left:381px;top:488px" width="8" height="8" viewBox="0 0 8 8"><path d="M4 0l4 4-4 4-4-4z" fill="#fff"/></svg>
 <span class="st" style="left:395px">1</span>
 <svg style="left:417px;top:488px" width="8" height="8" viewBox="0 0 8 8"><path d="M4 0l4 8H0z" fill="#fff"/></svg>
 <span class="st" style="left:432px">2.81K</span>
 <div class="abs" style="left:485px;top:491px;width:2px;height:2px;background:#fff"></div>
 <span class="st" style="left:497px">8.42K</span>
 <svg style="left:547px;top:489px" width="7" height="7" viewBox="0 0 7 7"><g stroke="#fff" stroke-width="1.500"><path d="M3.500 0v7M0 3.500h7M1 1l5 5M6 1l-5 5"/></g></svg>
 <div class="abs" style="left:553px;top:498px;width:80px;height:1px;background:repeating-linear-gradient(90deg,#5a5a5a 0,#5a5a5a 8px,transparent 8px,transparent 9px)"></div>
 <div class="abs" style="left:561.500px;top:485px;width:8.500px;height:14.500px;background:#2fe80f"></div>
</div>
</body>
</html>
